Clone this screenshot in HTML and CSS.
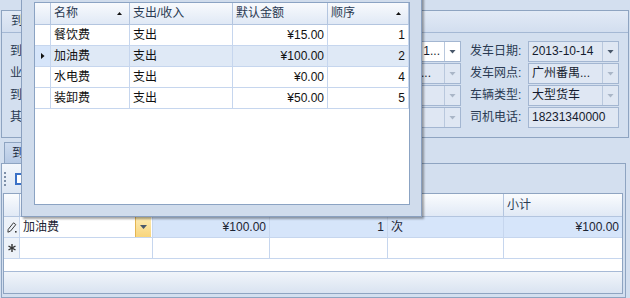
FILE: index.html
```html
<!DOCTYPE html>
<html lang="zh-CN">

<head>
    <meta charset="UTF-8">
    <title>费用录入</title>
    <link rel="stylesheet" href="styles.css">
</head>

<body>

    <div class="form">
        <!-- 到货信息 -->
        <div class="group">
            <div class="group-caption">到货信息</div>
            <div class="group-body">
                <div class="col col-left">
                    <div class="field">
                        <label>到站:</label>
                        <div class="combo">
                            <div class="val tail"><span>1...</span></div>
                            <span class="btn"><i class="arrow"></i></span>
                        </div>
                    </div>
                    <div class="field">
                        <label>业务:</label>
                        <div class="combo off">
                            <div class="val tail short"><span>...</span></div>
                            <span class="btn"><i class="arrow"></i></span>
                        </div>
                    </div>
                    <div class="field">
                        <label>到期:</label>
                        <div class="combo off">
                            <div class="val"></div>
                            <span class="btn"><i class="arrow"></i></span>
                        </div>
                    </div>
                    <div class="field">
                        <label>其他:</label>
                        <div class="combo off">
                            <div class="val"></div>
                            <span class="btn"><i class="arrow"></i></span>
                        </div>
                    </div>
                </div>
                <div class="col col-right">
                    <div class="field">
                        <label>发车日期:</label>
                        <div class="combo ro">
                            <div class="val"><span>2013-10-14</span></div>
                            <span class="btn"><i class="arrow"></i></span>
                        </div>
                    </div>
                    <div class="field">
                        <label>发车网点:</label>
                        <div class="combo off">
                            <div class="val"><span>广州番禺...</span></div>
                            <span class="btn"><i class="arrow"></i></span>
                        </div>
                    </div>
                    <div class="field">
                        <label>车辆类型:</label>
                        <div class="combo off">
                            <div class="val"><span>大型货车</span></div>
                            <span class="btn"><i class="arrow"></i></span>
                        </div>
                    </div>
                    <div class="field">
                        <label>司机电话:</label>
                        <div class="combo off">
                            <div class="val"><span>18231340000</span></div>
                        </div>
                    </div>
                </div>
            </div>
        </div>

        <!-- 费用明细 -->
        <div class="tabstrip">
            <div class="tab">到货费用</div>
        </div>
        <div class="page">
            <div class="toolbar">
                <span class="grip"><i></i><i></i><i></i><i></i></span>
                <span class="tool-icon"></span>
            </div>
            <div class="grid">
                <div class="grow ghead">
                    <span class="ind"></span>
                    <span>费用名称</span>
                    <span>金额</span>
                    <span>数量</span>
                    <span>单位</span>
                    <span>小计</span>
                </div>
                <div class="grow sel">
                    <span class="ind">
                        <svg width="10" height="11" viewBox="0 0 10 11">
                            <path d="M6.5 0.8 L8.8 2.6 L3.4 9.2 L0.9 10.2 L1.2 7.4 Z" fill="none" stroke="#3b3b3b" stroke-width="1"/>
                            <rect x="8" y="9" width="1.6" height="1.6" fill="#3b3b3b"/>
                        </svg>
                    </span>
                    <span class="editor"><em>加油费</em><b class="btn-hot"><i class="arrow"></i></b></span>
                    <span class="num">¥100.00</span>
                    <span class="num">1</span>
                    <span>次</span>
                    <span class="num">¥100.00</span>
                </div>
                <div class="grow">
                    <span class="ind">
                        <svg width="8" height="8" viewBox="0 0 8 8">
                            <g stroke="#333" stroke-width="1.4">
                                <line x1="4" y1="0" x2="4" y2="8"/>
                                <line x1="0.5" y1="2" x2="7.5" y2="6"/>
                                <line x1="0.5" y1="6" x2="7.5" y2="2"/>
                            </g>
                        </svg>
                    </span>
                    <span></span><span></span><span></span><span></span><span></span>
                </div>
                <div class="gfill"></div>
                <div class="gfoot"></div>
            </div>
        </div>
    </div>

    <!-- 费用项目下拉 -->
    <div class="popup">
        <div class="popup-grid">
            <div class="prow phead">
                <span class="ind"></span>
                <span class="sorted">名称<i class="sort"></i></span>
                <span>支出/收入</span>
                <span>默认金额</span>
                <span class="sorted">顺序<i class="sort"></i></span>
            </div>
            <div class="prow">
                <span class="ind"></span><span>餐饮费</span><span>支出</span>
                <span class="num">¥15.00</span><span class="num">1</span>
            </div>
            <div class="prow sel">
                <span class="ind"><i class="cur"></i></span><span>加油费</span><span>支出</span>
                <span class="num">¥100.00</span><span class="num">2</span>
            </div>
            <div class="prow">
                <span class="ind"></span><span>水电费</span><span>支出</span>
                <span class="num">¥0.00</span><span class="num">4</span>
            </div>
            <div class="prow">
                <span class="ind"></span><span>装卸费</span><span>支出</span>
                <span class="num">¥50.00</span><span class="num">5</span>
            </div>
        </div>
    </div>

</body>

</html>
```

FILE: styles.css
```css
* {
    margin: 0;
    padding: 0;
    box-sizing: border-box;
}

body {
    font-family: "Liberation Sans", "Noto Sans CJK SC", sans-serif;
    font-size: 12px;
    color: #1c2433;
    background: #d3dfef;
    width: 630px;
    height: 298px;
    overflow: hidden;
    position: relative;
}

.form {
    padding-top: 10px;
}

/* group box */
.group {
    margin: 0 1px;
    height: 128px;
    border: 1px solid #8ea4c1;
}

.group-caption {
    height: 22px;
    border-bottom: 1px solid #a4b8d4;
    background: linear-gradient(#e2eaf6, #d2deef);
    padding-left: 9px;
    line-height: 21px;
    color: #2a3a52;
    overflow: hidden;
}

.group-body {
    display: flex;
    gap: 9px;
    padding: 8px 0 0 8px;
}

.col {
    display: flex;
    flex-direction: column;
    gap: 1px;
}

.col-left {
    width: 451px;
}

.col-right {
    width: 149px;
}

.field {
    display: flex;
    height: 21px;
}

.field label {
    line-height: 21px;
    color: #2a3a52;
    white-space: nowrap;
}

.col-left label {
    width: 60px;
}

.col-right label {
    width: 58px;
}

.combo {
    flex: 1;
    display: flex;
    height: 21px;
    border: 1px solid #a3b6d1;
    background: #fff;
}

.combo.off,
.combo.ro {
    background: #dfe7f3;
}

.combo .val {
    flex: 1;
    display: flex;
    padding: 0 3px;
    line-height: 19px;
    overflow: hidden;
    white-space: nowrap;
    color: #141b2e;
}

.combo .val.tail {
    justify-content: flex-end;
    padding-right: 4px;
}

.combo .val.short {
    padding-right: 13px;
}

.combo .btn {
    width: 16px;
    border-left: 1px solid #b9c8dd;
    display: flex;
    align-items: center;
    justify-content: center;
}

.arrow {
    display: block;
    width: 7px;
    height: 4px;
    background: #4a586b;
    clip-path: polygon(0 0, 100% 0, 50% 100%);
}

.combo.off .arrow {
    background: #aab6c7;
}

/* tabs */
.tabstrip {
    height: 25px;
    padding: 4px 0 0 4px;
    display: flex;
}

.tab {
    width: 72px;
    height: 21px;
    border: 1px solid #8ea4c1;
    border-bottom: none;
    background: linear-gradient(#cddbef, #b6c9e4);
    padding-left: 7px;
    line-height: 20px;
    color: #1f2d44;
}

.page {
    margin-left: 1px;
    width: 625px;
    height: 135px;
    border: 1px solid #8ea4c1;
}

.toolbar {
    height: 29px;
    width: 190px;
    background: linear-gradient(#f3f7fc, #dce6f3);
    display: flex;
    align-items: center;
    gap: 9px;
    padding-left: 2px;
}

.grip {
    display: flex;
    flex-direction: column;
    gap: 2px;
}

.grip i {
    width: 2px;
    height: 2px;
    background: #7d8fa8;
}

.tool-icon {
    width: 13px;
    height: 12px;
    border: 2px solid #3b71c6;
    background: #fff;
}

/* bottom grid */
.grid {
    margin-left: 1px;
    width: 620px;
    height: 101px;
    border: 1px solid #8ea4c1;
    background: #fff;
    display: flex;
    flex-direction: column;
}

.grow {
    display: grid;
    grid-template-columns: 16px 133px 117px 118px 116px 118px;
    height: 21px;
    flex: none;
}

.grow > span {
    border-right: 1px solid #c6d6ee;
    border-bottom: 1px solid #c6d6ee;
    padding: 0 3px;
    line-height: 20px;
    white-space: nowrap;
    overflow: hidden;
}

.grow > span:last-child {
    border-right: none;
}

.grow .ind {
    background: #edf2f9;
    display: flex;
    align-items: center;
    justify-content: center;
    padding: 0;
}

.ghead {
    height: 23px;
    background: linear-gradient(#fafcfe, #dfe8f5);
}

.ghead > span {
    border-color: #b3c5df;
    line-height: 22px;
    color: #2a3a52;
}

.ghead .ind {
    background: none;
}

.sel > span {
    background: #d6e5fa;
}

.num {
    text-align: right;
}

.editor {
    display: flex;
    padding-right: 1px !important;
}

.sel .editor {
    background: #fff;
}

.editor em {
    flex: 1;
    font-style: normal;
}

.btn-hot {
    width: 16px;
    border-left: 1px solid #e4b552;
    background: linear-gradient(#fdebb4, #f8d57c);
    display: flex;
    align-items: center;
    justify-content: center;
}

.gfill {
    flex: 1;
}

.gfoot {
    height: 22px;
    border-top: 1px solid #a7bad6;
    background: linear-gradient(#f1f5fa, #d9e3f1);
}

/* dropdown popup */
.popup {
    position: absolute;
    left: 21px;
    top: -10px;
    width: 401px;
    height: 227px;
    background: #d0dcec;
    border: 1px solid #8aa0bf;
    padding: 11px 11px 11px 12px;
    box-shadow: 2px 2px 2px rgba(0, 0, 0, 0.35);
}

.popup-grid {
    height: 100%;
    background: #fff;
    border: 1px solid #8ba3c3;
}

.prow {
    display: grid;
    grid-template-columns: 16px 79px 103px 95px 81px;
    height: 21px;
}

.prow > span {
    border-right: 1px solid #c6d6ee;
    border-bottom: 1px solid #c6d6ee;
    padding: 0 3px;
    line-height: 20px;
    white-space: nowrap;
    overflow: hidden;
    color: #111;
}

.phead {
    height: 22px;
    background: linear-gradient(#f8fafd, #dfe8f5);
}

.phead > span {
    border-color: #b3c5df;
    line-height: 21px;
    color: #2a3a52;
}

.phead .sorted {
    display: flex;
    align-items: center;
    justify-content: space-between;
    padding-right: 7px;
}

.sort {
    width: 5px;
    height: 3px;
    background: #111;
    clip-path: polygon(50% 0, 100% 100%, 0 100%);
}

.prow .ind {
    display: flex;
    align-items: center;
    justify-content: center;
    padding: 0;
}

.prow.sel > span:not(.ind) {
    background: #dfe9f6;
}

.cur {
    width: 4px;
    height: 7px;
    background: #111;
    clip-path: polygon(0 0, 100% 50%, 0 100%);
}
```
